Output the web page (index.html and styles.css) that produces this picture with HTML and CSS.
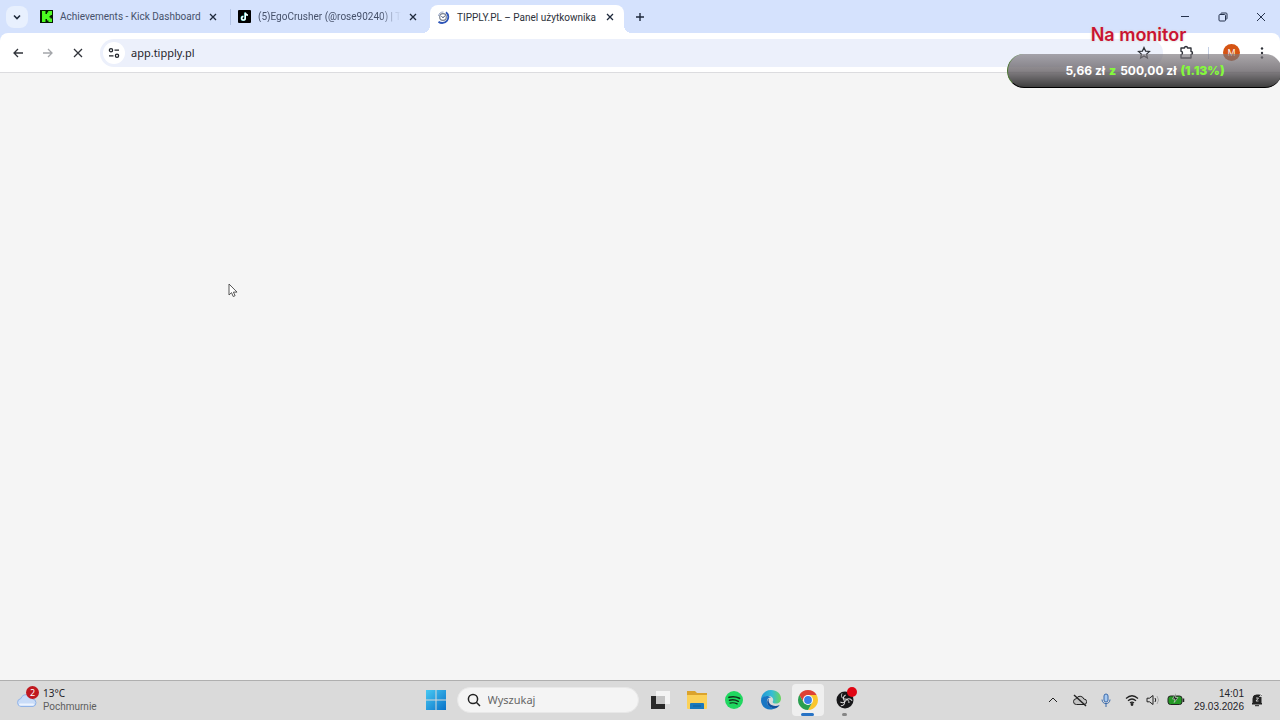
FILE: index.html
```html
<!DOCTYPE html>
<html lang="pl">
<head>
    <meta charset="UTF-8">
    <meta name="viewport" content="width=device-width, initial-scale=1.0">
    <title>TIPPLY.PL – Panel użytkownika</title>
    <link rel="stylesheet" href="styles.css">
</head>
<body>
    <header class="browser">
        <div class="tab-strip">
            <button class="tab-search" aria-label="Szukaj kart">
                <svg width="10" height="10" viewBox="0 0 10 10"><path d="M2 3.5l3 3 3-3" fill="none" stroke="#1f2a3c" stroke-width="1.6"/></svg>
            </button>
            <div class="tab">
                <svg class="favicon" viewBox="0 0 13 13"><rect width="13" height="13" fill="#051b03"/><path d="M2 1h3.500v3H7V2.500h1.200V1H12v4h-1.500v1H9.500v1.500h1V8.500H12V12H8.500v-1.500H7V9H5.500v3H2z" fill="#4cfa20"/></svg>
                <span class="tab-title">Achievements - Kick Dashboard</span>
                <button class="close" aria-label="Zamknij"><svg viewBox="0 0 10 10"><path d="M2 2l6 6M8 2l-6 6"/></svg></button>
            </div>
            <div class="tab divided">
                <svg class="favicon" viewBox="0 0 13 13"><rect width="13" height="13" rx="1" fill="#000"/><path d="M7 2.500v5.700a1.800 1.800 0 1 1-1.800-1.800M7 2.500c.2 1.600 1.200 2.400 2.800 2.500" fill="none" stroke="#38e6e2" stroke-width="1.600"/><path d="M7.300 2.700v5.600a1.800 1.800 0 1 1-1.800-1.800M7.300 2.700c.2 1.600 1.200 2.400 2.600 2.500" fill="none" stroke="#fff" stroke-width="1.400"/></svg>
                <span class="tab-title faded">(5)EgoCrusher (@rose90240) | T</span>
                <button class="close" aria-label="Zamknij"><svg viewBox="0 0 10 10"><path d="M2 2l6 6M8 2l-6 6"/></svg></button>
            </div>
            <div class="tab active">
                <svg class="favicon" viewBox="0 0 13 13" fill="none"><circle cx="6" cy="6" r="3.300" stroke="#7b8391" stroke-width="1.200"/><path d="M4.500 5.200L6 6.800l2-2.200" stroke="#354468"/><path d="M9 1.200a5.800 5.800 0 0 1-7.500 9.500" stroke="#2f56b8" stroke-width="1.800"/><path d="M1.500 5a5 5 0 0 1 5-4" stroke="#9aa8c8"/></svg>
                <span class="tab-title">TIPPLY.PL – Panel użytkownika</span>
                <button class="close" aria-label="Zamknij"><svg viewBox="0 0 10 10"><path d="M2 2l6 6M8 2l-6 6"/></svg></button>
            </div>
            <button class="new-tab" aria-label="Nowa karta"><svg width="12" height="12" viewBox="0 0 12 12"><path d="M6 2v8M2 6h8" stroke="#1f2a3c" stroke-width="1.400"/></svg></button>
            <div class="window-buttons">
                <button aria-label="Minimalizuj"><svg viewBox="0 0 10 10"><path d="M1 4.500h8"/></svg></button>
                <button aria-label="Przywróć"><svg viewBox="0 0 10 10"><rect x="1" y="2.500" width="6.500" height="6.500" rx="1"/><path d="M3 2.500V1.500Q3 1 3.500 1H8q1 0 1 1v4.500q0 .5-.5.5h-1"/></svg></button>
                <button aria-label="Zamknij okno"><svg viewBox="0 0 10 10"><path d="M1 1l8 8M9 1l-8 8"/></svg></button>
            </div>
        </div>
        <div class="toolbar">
            <button class="nav" aria-label="Wstecz"><svg viewBox="0 0 12 12"><path d="M11 6H2M6 2L2 6l4 4"/></svg></button>
            <button class="nav" aria-label="Dalej" disabled><svg viewBox="0 0 12 12"><path d="M1 6h9M6 2l4 4-4 4"/></svg></button>
            <button class="nav" aria-label="Zatrzymaj"><svg viewBox="0 0 12 12"><path d="M2 2l8 8M10 2l-8 8"/></svg></button>
            <div class="address">
                <button class="site-info" aria-label="Informacje o stronie"><svg width="12" height="12" viewBox="0 0 12 12" fill="none" stroke="#1f2329" stroke-width="1.300"><circle cx="3" cy="3.200" r="1.600"/><path d="M6.500 3.200H11M1 8.800h4.500"/><circle cx="9" cy="8.800" r="1.600"/></svg></button>
                <input class="url" type="text" value="app.tipply.pl" aria-label="Adres">
                <button class="star" aria-label="Dodaj do zakładek"><svg width="14" height="14" viewBox="0 0 14 14"><path d="M7 1.500l1.600 3.600 3.900.4-2.900 2.600.8 3.900L7 10l-3.400 2 .8-3.900-2.900-2.600 3.900-.4z" fill="none" stroke="#30333a" stroke-width="1.200"/></svg></button>
            </div>
            <button class="extensions" aria-label="Rozszerzenia"><svg width="15" height="15" viewBox="0 0 15 15"><path d="M2 3h3.500c0-2 3-2 3 0H12v3.500c2 0 2 3 0 3V13H2V9.800c2-.3 2-3.300 0-3.600z" fill="none" stroke="#30333a" stroke-width="1.400" stroke-linejoin="round"/></svg></button>
            <span class="separator"></span>
            <button class="avatar" aria-label="Profil">M</button>
            <button class="menu" aria-label="Menu"><svg width="4" height="14" viewBox="0 0 4 14" fill="#30333a"><circle cx="2" cy="2.500" r="1.200"/><circle cx="2" cy="7" r="1.200"/><circle cx="2" cy="11.500" r="1.200"/></svg></button>
        </div>
    </header>

    <main></main>

    <!-- stream goal, floats over the browser window -->
    <div class="goal">
        <div class="goal-title">Na monitor</div>
        <div class="goal-bar"><span>5,66 zł</span><b>z</b><span>500,00 zł</span><b>(1.13%)</b></div>
    </div>

    <svg class="cursor" width="10" height="15" viewBox="0 0 10 15"><path d="M1 1v11l2.500-2.400L5.200 13.500l1.900-.8-1.700-3.600H9z" fill="#fff" stroke="#444" stroke-width=".9"/></svg>

    <footer class="taskbar">
        <button class="weather">
            <span class="weather-icon">
                <svg width="22" height="16" viewBox="0 0 22 16"><path d="M5 14.500a4 4 0 0 1-.2-7.900A6.200 6.200 0 0 1 16.500 7a3.800 3.800 0 0 1 .5 7.500z" fill="#c9dcf8" stroke="#91b4e8"/><path d="M4 12.500h13" stroke="#edf4ff" stroke-width="2" stroke-linecap="round"/></svg>
                <span class="badge">2</span>
            </span>
            <span class="weather-text"><span>13°C</span><small>Pochmurnie</small></span>
        </button>
        <div class="apps">
            <button class="app start" aria-label="Start"><svg width="20" height="20" viewBox="0 0 20 20"><defs><linearGradient id="win" x2="1" y2="1"><stop stop-color="#48c9f3"/><stop offset="1" stop-color="#0871c8"/></linearGradient></defs><path d="M0 0h9.500v9.500H0zM10.500 0H20v9.500h-9.500zM0 10.500h9.500V20H0zM10.500 10.500H20V20h-9.500z" fill="url(#win)"/></svg></button>
            <label class="search">
                <svg width="14" height="14" viewBox="0 0 14 14"><circle cx="6" cy="6" r="4.600" fill="none" stroke="#222" stroke-width="1.500"/><path d="M9.300 9.300l3.700 3.700" stroke="#222" stroke-width="1.500"/></svg>
                <input type="search" placeholder="Wyszukaj" aria-label="Wyszukaj">
            </label>
            <button class="app" aria-label="Widok zadań"><svg width="20" height="20" viewBox="0 0 20 20"><path d="M1 6h14v13H1z" fill="#292929"/><path d="M6 1h14v13H6z" fill="#f4f4f4"/><path d="M6 6h9v8H6z" fill="#c5c5c5"/></svg></button>
            <button class="app" aria-label="Eksplorator plików"><svg width="22" height="20" viewBox="0 0 22 20"><path d="M1 1h8l2 2h10v5H1z" fill="#dba32d"/><path d="M1 5h20v13q0 1-1 1H2q-1 0-1-1z" fill="#fbd158"/><path d="M4 19v-5q0-1 1-1h12q1 0 1 1v5z" fill="#1979bd"/><path d="M7 16h8" stroke="#125e98"/></svg></button>
            <button class="app" aria-label="Spotify"><svg width="20" height="20" viewBox="0 0 20 20" fill="none" stroke="#12301b" stroke-linecap="round"><circle cx="10" cy="10" r="9" fill="#20d760" stroke="none"/><path d="M5 7.300q5.500-1.500 10.500 1" stroke-width="1.700"/><path d="M5.500 10.300q4.500-1.300 8.800 1" stroke-width="1.500"/><path d="M6 13.100q3.800-1 7.200.8" stroke-width="1.200"/></svg></button>
            <button class="app" aria-label="Edge"><svg width="22" height="22" viewBox="0 0 22 22"><defs><linearGradient id="edge" x2="1"><stop stop-color="#2097d5"/><stop offset=".55" stop-color="#36bcd4"/><stop offset="1" stop-color="#6bd65b"/></linearGradient></defs><path d="M1 11C1 5 5.500 1 11 1c6 0 10 4 10 8.500 0 3-2 5-5 5-2.500 0-4-1-3-2.400C14 9 11.500 7 8.500 7 5 7 2 9 1 11z" fill="url(#edge)"/><path d="M1 11c1-4 7-5.500 10-2.500-3 0-4.500 2.200-4 5 .7 4 5 6 9.500 5C9.500 23.500 1 19 1 11z" fill="#1976c3"/><path d="M9 9.500c-2 5 4 9.500 10.700 6.500-.8 1.300-2 2.200-3.200 3C10 20.500 4 14 9 9.500z" fill="#12519c"/></svg></button>
            <button class="app current" aria-label="Chrome"><svg width="22" height="22" viewBox="0 0 22 22"><path d="M19.660 6A10 10 0 0 1 11 21l4.300-7.500L11 6z" fill="#fac62d"/><path d="M2.340 6L6.700 13.500 11 11V6h8.660A10 10 0 0 0 2.340 6z" fill="#df4134"/><path d="M2.340 6A10 10 0 0 0 11 21l4.300-7.500H6.700z" fill="#2a9f50"/><circle cx="11" cy="11" r="5" fill="#fff"/><circle cx="11" cy="11" r="3.900" fill="#397fe8"/></svg></button>
            <button class="app running" aria-label="OBS Studio"><svg width="22" height="22" viewBox="0 0 22 22"><circle cx="11" cy="11" r="8.500" fill="#171719"/><g fill="none" stroke="#ddd" stroke-width="1"><path id="blade" d="M8 4.500c-1.500 3 .5 5.500 3 5.500 3 0 4 2 4 4"/><use href="#blade" transform="rotate(120 11 11)"/><use href="#blade" transform="rotate(240 11 11)"/></g></svg><span class="record"></span></button>
        </div>
        <div class="tray">
            <button aria-label="Ukryte ikony"><svg width="10" height="14" viewBox="0 0 10 14"><path d="M1 9l4-4 4 4"/></svg></button>
            <button class="cloud" aria-label="OneDrive"><svg width="14" height="14" viewBox="0 0 14 14"><path d="M3.500 11.500a2.900 2.900 0 0 1-.2-5.800A4 4 0 0 1 10.800 6a2.700 2.700 0 0 1 .2 5.500z" fill="#c4c4c4"/><path d="M1 2l12 11" stroke-width="1.400"/></svg></button>
            <button class="mic" aria-label="Mikrofon"><svg width="12" height="14" viewBox="0 0 12 14"><rect x="4" y="1" width="4" height="8" rx="2" fill="#a7c9f0"/><path d="M2 6.500c0 5.500 8 5.500 8 0M6 10.600V14"/></svg></button>
            <button class="wifi" aria-label="Sieć"><svg width="14" height="14" viewBox="0 0 14 14" stroke-width="1.200"><path d="M1 5.500q6-5.500 12 0M3 7.800q4-3.600 8 0M5 10q2-1.800 4 0"/><circle cx="7" cy="11.500" r=".8" fill="#222"/></svg></button>
            <button class="sound" aria-label="Głośność"><svg width="14" height="14" viewBox="0 0 14 14"><path d="M1 5.200h2.500L7 2.500v9L3.500 8.800H1z"/><path d="M9 5q1.500 2 0 4"/><path d="M11 3q3 4 0 8" stroke="#aaa"/></svg></button>
            <button class="battery" aria-label="Bateria"><svg width="18" height="14" viewBox="0 0 18 14"><rect x="1" y="3" width="14" height="8.500" rx="2.500" fill="#249825"/><path d="M16.500 5.500v3.500" stroke-width="1.500"/><path d="M9 0L5.500 6H8l-.8 3.500L11 4.500H8.500z" fill="#222" stroke="#dce9dc" stroke-width=".6"/></svg></button>
            <button class="clock"><time>14:01</time><time>29.03.2026</time></button>
            <button class="bell" aria-label="Powiadomienia"><svg width="12" height="14" viewBox="0 0 12 14"><path d="M2 10V5.500Q2 2 5.500 2H10v8l1 1H1zM4 12.700h4" fill="#222"/><path d="M5 5h2.500L5 8h2.500M8.500 1H11L8.500 3.500H11" stroke="#eee" stroke-width=".8"/></svg></button>
        </div>
    </footer>
</body>
</html>
```
FILE: styles.css
```css
* {
    box-sizing: border-box;
}
body {
    display: flex;
    flex-direction: column;
    min-height: 100vh;
    margin: 0;
    font-family: "Open Sans", "Noto Sans", sans-serif;
    font-size: 12px;
    color: #1f2329;
    background-color: #f5f5f5;
    overflow: hidden;
}
button, input {
    margin: 0;
    padding: 0;
    border: none;
    background: none;
    font: inherit;
    color: inherit;
}
button {
    display: flex;
    align-items: center;
    justify-content: center;
    flex-shrink: 0;
}
input {
    min-width: 0;
    outline: none;
}
svg {
    display: block;
    flex-shrink: 0;
}
main {
    flex: 1;
}

/* browser */
.browser {
    background-color: #d5e2fd;
    border-bottom: 1px solid #dcdcdf;
}
.tab-strip {
    display: flex;
    align-items: center;
    height: 33px;
    padding-left: 6px;
}
.tab-search {
    width: 22px;
    height: 22px;
    margin-right: 4px;
    border-radius: 8px;
    background-color: #e8f0fe;
}
.tab {
    position: relative;
    display: flex;
    align-items: center;
    gap: 7px;
    width: 198px;
    height: 28px;
    padding: 0 12px 0 8px;
    font-family: Roboto, sans-serif;
    font-size: 10px;
    color: #46516a;
}
.divided {
    padding: 0 14px 0 7px;
    border-left: 1px solid #b4c5e6;
    border-image: linear-gradient(transparent 25%, #b4c5e6 25%, #b4c5e6 75%, transparent 75%) 1;
}
.active {
    align-self: flex-end;
    width: 194px;
    margin-left: 2px;
    padding: 0 9px 4px 7px;
    color: #2c3039;
    background-color: #fff;
    border-radius: 8px 8px 0 0;
}
.active::before, .active::after {
    content: "";
    position: absolute;
    bottom: 0;
    width: 8px;
    height: 8px;
}
.active::before {
    right: 100%;
    background: radial-gradient(circle at 0 0, transparent 8px, #fff 8px);
}
.active::after {
    left: 100%;
    background: radial-gradient(circle at 100% 0, transparent 8px, #fff 8px);
}
.favicon {
    width: 13px;
    height: 13px;
}
.tab-title {
    flex: 1;
    white-space: nowrap;
}
.faded {
    -webkit-mask-image: linear-gradient(to right, #000 85%, transparent);
    mask-image: linear-gradient(to right, #000 85%, transparent);
}
.close svg {
    width: 10px;
    height: 10px;
    stroke: #1f2a3c;
    stroke-width: 1.3;
}
.new-tab {
    width: 28px;
    height: 28px;
    margin-left: 2px;
}
.window-buttons {
    display: flex;
    margin-left: auto;
}
.window-buttons button {
    width: 38px;
    height: 32px;
}
.window-buttons svg {
    width: 10px;
    height: 10px;
    fill: none;
    stroke: #26334d;
}
.toolbar {
    display: flex;
    align-items: center;
    height: 39px;
    padding: 0 10px 0 3px;
    background-color: #fff;
    border-radius: 8px 8px 0 0;
}
.nav {
    width: 30px;
    height: 28px;
}
.nav svg {
    width: 12px;
    height: 12px;
    fill: none;
    stroke: #30333a;
    stroke-width: 1.3;
}
.nav:disabled svg {
    stroke: #a4a6aa;
}
.address {
    display: flex;
    align-items: center;
    flex: 1;
    height: 28px;
    margin-left: 7px;
    padding: 0 12px 0 3px;
    border-radius: 14px;
    background-color: #ecf0fb;
}
.site-info {
    width: 22px;
    height: 22px;
    border-radius: 50%;
    background-color: #fff;
}
.url {
    flex: 1;
    padding-left: 6px;
    font-family: "Noto Sans", sans-serif;
    font-size: 11px;
}
.extensions {
    margin-left: 16px;
}
.separator {
    width: 1px;
    height: 12px;
    margin: 0 14px;
    background-color: #c5d0e4;
}
.avatar {
    width: 17px;
    height: 17px;
    border-radius: 50%;
    background-color: #d55413;
    color: #fff;
    font-size: 9px;
}
.menu {
    width: 16px;
    height: 20px;
    margin-left: 14px;
}

/* goal */
.goal {
    position: absolute;
    top: 24px;
    right: -2px;
    width: 275px;
    font-family: Inter, sans-serif;
    font-weight: 700;
    text-align: center;
}
.goal-title {
    height: 30px;
    padding-right: 12px;
    color: #c91432;
    font-size: 18px;
    font-weight: 600;
    line-height: 22px;
    text-shadow: 0 0 2px #fff, 0 0 2px #aaa;
}
.goal-bar {
    display: flex;
    justify-content: center;
    gap: 4px;
    height: 34px;
    border-left: 1px solid #47732d;
    border-bottom: 1px solid #000;
    border-radius: 17px;
    background: linear-gradient(rgba(125, 120, 125, 0.65), rgba(105, 100, 105, 0.8) 50%, #3f3f3f);
    color: #fff;
    font-size: 12px;
    line-height: 33px;
}
.goal-bar b {
    color: #85f83d;
}
.cursor {
    position: absolute;
    top: 283px;
    left: 228px;
}

/* taskbar */
.taskbar {
    display: grid;
    grid-template-columns: 1fr auto 1fr;
    align-items: center;
    height: 40px;
    padding-bottom: 2px;
    border-top: 1px solid #afafaf;
    background-color: #dadada;
    font-family: "Noto Sans", sans-serif;
    font-size: 10px;
}
.weather {
    justify-self: start;
    gap: 5px;
    padding-left: 16px;
    line-height: 13px;
    text-align: left;
}
.weather-icon {
    position: relative;
}
.badge {
    position: absolute;
    top: -6px;
    right: -1px;
    width: 13px;
    height: 13px;
    border-radius: 50%;
    background-color: #c01920;
    color: #fff;
    font-size: 9px;
    text-align: center;
}
.weather-text {
    display: flex;
    flex-direction: column;
}
.weather-text small {
    font-family: Roboto, sans-serif;
    font-size: 10px;
    color: #5e5e5e;
}
.apps {
    display: flex;
    align-items: center;
    gap: 5px;
}
.app {
    position: relative;
    width: 32px;
    height: 32px;
    border-radius: 4px;
}
.search {
    display: flex;
    align-items: center;
    gap: 7px;
    width: 182px;
    height: 26px;
    padding: 0 9px;
    border: 1px solid #e8e8e8;
    border-radius: 13px;
    background-color: #f4f4f4;
}
.search input {
    flex: 1;
    font-family: "Noto Sans", sans-serif;
    font-size: 11px;
}
.search input::placeholder {
    color: #666;
}
.current {
    background-color: #efefef;
}
.current::after, .running::after {
    content: "";
    position: absolute;
    bottom: 0;
    width: 13px;
    height: 3px;
    border-radius: 2px;
    background-color: #2873c5;
}
.running::after {
    width: 5px;
    background-color: #858585;
}
.record {
    position: absolute;
    top: 3px;
    right: 4px;
    width: 10px;
    height: 10px;
    border-radius: 50%;
    background-color: #e00614;
}
.tray {
    display: flex;
    align-items: center;
    justify-self: end;
    gap: 7px;
    padding-right: 17px;
}
.tray svg {
    fill: none;
    stroke: #222;
}
.cloud {
    margin-left: 8px;
}
.tray .mic {
    margin: 0 6px;
}
.mic svg {
    stroke: #3969aa;
}
.clock {
    flex-direction: column;
    align-items: flex-end;
    margin-left: 2px;
    font-family: "Liberation Sans", sans-serif;
    line-height: 13px;
}
```
